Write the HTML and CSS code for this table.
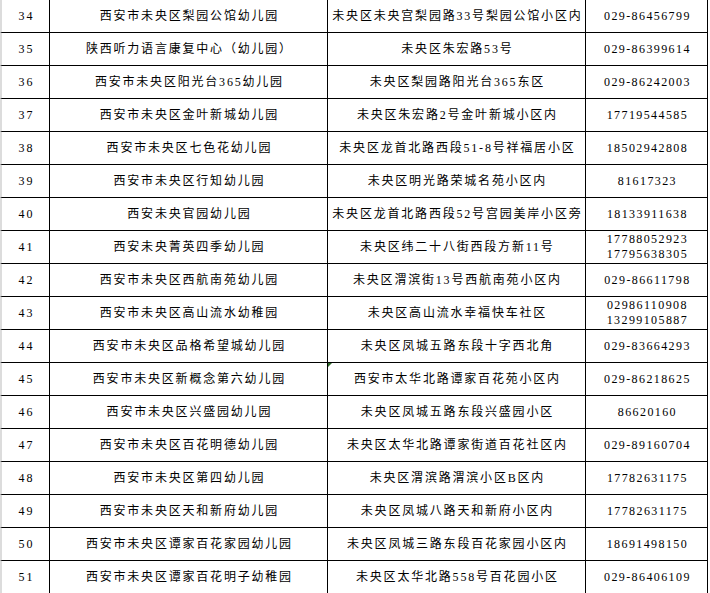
FILE: index.html
```html
<!DOCTYPE html>
<html lang="zh-CN">
<head>
<meta charset="utf-8">
<title>幼儿园名单</title>
<link rel="stylesheet" href="styles.css">
</head>
<body>
<div class="sheet">
  <div class="c num">34</div><div class="c">西安市未央区梨园公馆幼儿园</div><div class="c">未央区未央宫梨园路33号梨园公馆小区内</div><div class="c tel">029-86456799</div>
  <div class="c num">35</div><div class="c">陕西听力语言康复中心（幼儿园）</div><div class="c">未央区朱宏路53号</div><div class="c tel">029-86399614</div>
  <div class="c num">36</div><div class="c">西安市未央区阳光台365幼儿园</div><div class="c">未央区梨园路阳光台365东区</div><div class="c tel">029-86242003</div>
  <div class="c num">37</div><div class="c">西安市未央区金叶新城幼儿园</div><div class="c">未央区朱宏路2号金叶新城小区内</div><div class="c tel">17719544585</div>
  <div class="c num">38</div><div class="c">西安市未央区七色花幼儿园</div><div class="c">未央区龙首北路西段51-8号祥福居小区</div><div class="c tel">18502942808</div>
  <div class="c num">39</div><div class="c">西安市未央区行知幼儿园</div><div class="c">未央区明光路荣城名苑小区内</div><div class="c tel">81617323</div>
  <div class="c num">40</div><div class="c">西安未央官园幼儿园</div><div class="c">未央区龙首北路西段52号宫园美岸小区旁</div><div class="c tel">18133911638</div>
  <div class="c num">41</div><div class="c">西安未央菁英四季幼儿园</div><div class="c">未央区纬二十八街西段方新11号</div><div class="c tel two">17788052923<br>17795638305</div>
  <div class="c num">42</div><div class="c">西安市未央区西航南苑幼儿园</div><div class="c">未央区渭滨街13号西航南苑小区内</div><div class="c tel">029-86611798</div>
  <div class="c num">43</div><div class="c">西安市未央区高山流水幼稚园</div><div class="c">未央区高山流水幸福快车社区</div><div class="c tel two">02986110908<br>13299105887</div>
  <div class="c num">44</div><div class="c">西安市未央区品格希望城幼儿园</div><div class="c">未央区凤城五路东段十字西北角</div><div class="c tel">029-83664293</div>
  <div class="c num">45</div><div class="c">西安市未央区新概念第六幼儿园</div><div class="c flag">西安市太华北路谭家百花苑小区内</div><div class="c tel">029-86218625</div>
  <div class="c num">46</div><div class="c">西安市未央区兴盛园幼儿园</div><div class="c">未央区凤城五路东段兴盛园小区</div><div class="c tel">86620160</div>
  <div class="c num">47</div><div class="c">西安市未央区百花明德幼儿园</div><div class="c">未央区太华北路谭家街道百花社区内</div><div class="c tel">029-89160704</div>
  <div class="c num">48</div><div class="c">西安市未央区第四幼儿园</div><div class="c">未央区渭滨路渭滨小区B区内</div><div class="c tel">17782631175</div>
  <div class="c num">49</div><div class="c">西安市未央区天和新府幼儿园</div><div class="c">未央区凤城八路天和新府小区内</div><div class="c tel">17782631175</div>
  <div class="c num">50</div><div class="c">西安市未央区谭家百花家园幼儿园</div><div class="c">未央区凤城三路东段百花家园小区内</div><div class="c tel">18691498150</div>
  <div class="c num">51</div><div class="c">西安市未央区谭家百花明子幼稚园</div><div class="c">未央区太华北路558号百花园小区</div><div class="c tel">029-86406109</div>
</div>
</body>
</html>
```
FILE: styles.css
```css
html, body {
  margin: 0;
  padding: 0;
  background: #ffffff;
}

.sheet {
  display: grid;
  grid-template-columns: 50px 278px 258px 122px;
  grid-auto-rows: 33px;
  width: 708px;
  font-family: "Liberation Serif", "Noto Sans CJK SC", serif;
  font-size: 12px;
  color: #000;
  letter-spacing: 1.8px;
}

.c {
  box-sizing: border-box;
  border-right: 1px solid #000;
  border-bottom: 1px solid #000;
  display: flex;
  align-items: center;
  justify-content: center;
  text-align: center;
  white-space: nowrap;
  line-height: 15px;
  padding-left: 1.8px;
  position: relative;
}

.num {
  border-left: 2px solid #dcdcdc;
}

.tel {
  letter-spacing: 1.4px;
}

.two {
  line-height: 15px;
}

.flag::before {
  content: "";
  position: absolute;
  left: 0;
  top: 0;
  width: 0;
  height: 0;
  border-top: 4px solid #2f6b2a;
  border-right: 4px solid transparent;
}
```
